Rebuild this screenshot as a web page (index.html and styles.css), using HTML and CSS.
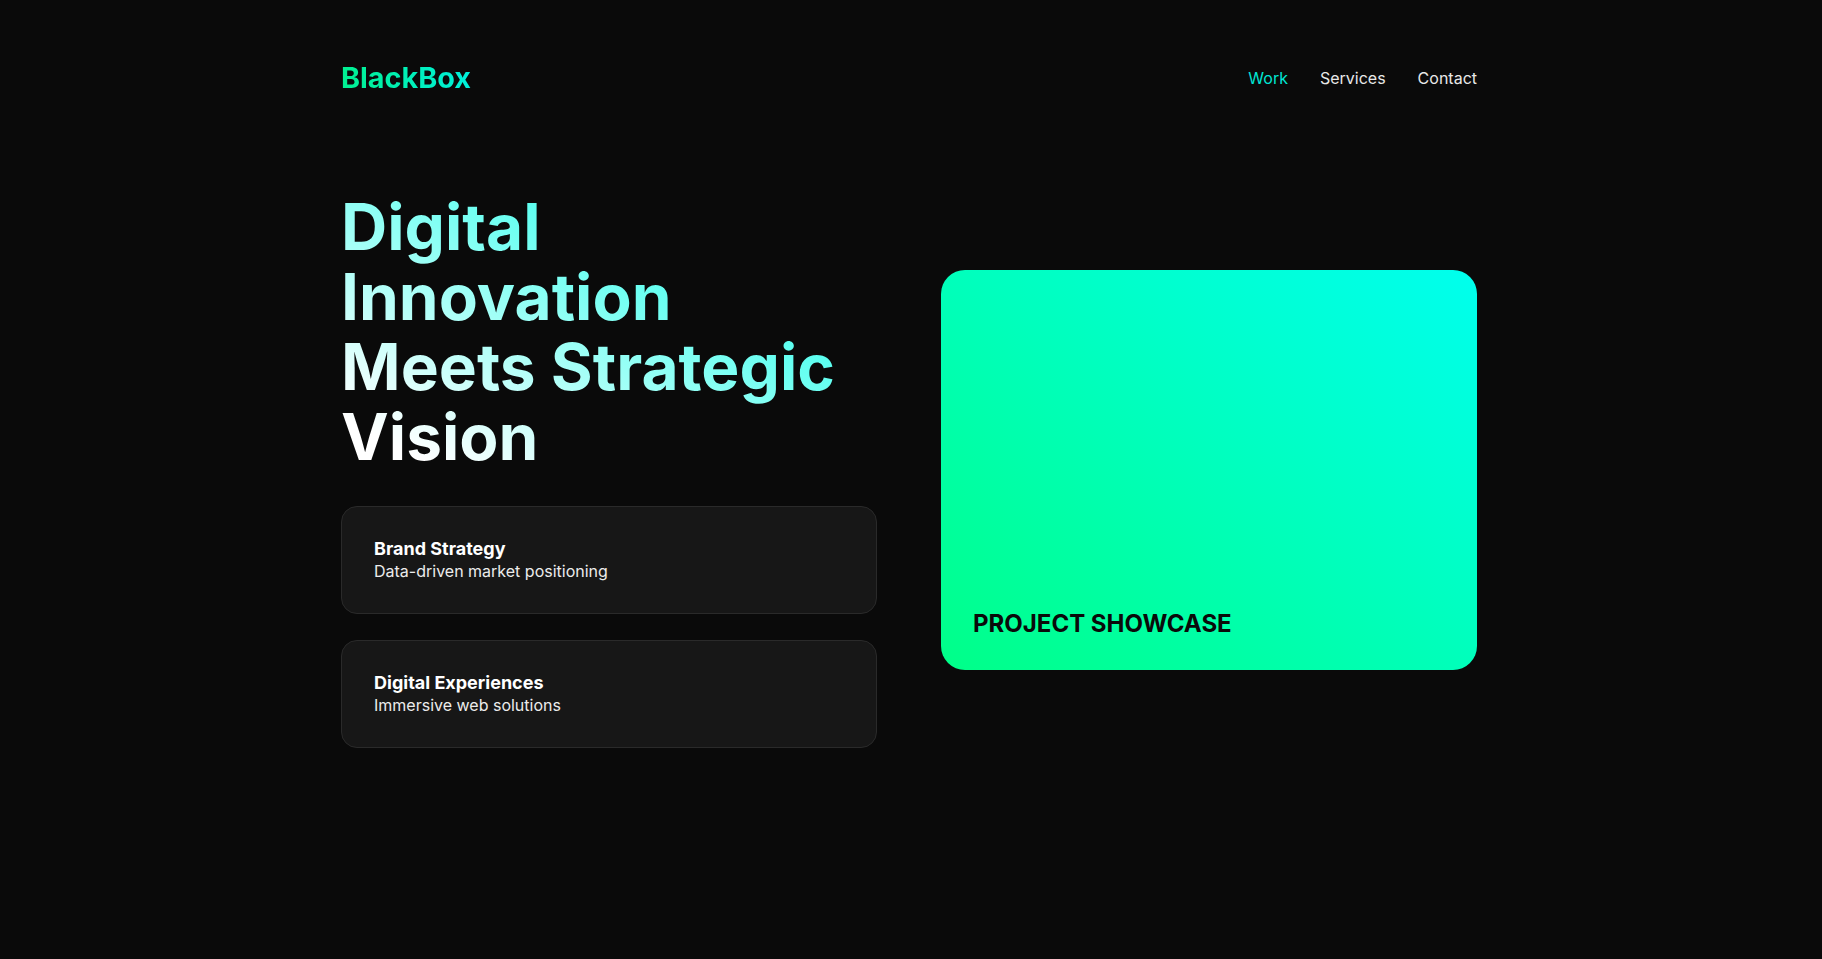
FILE: index.html
```html
<!DOCTYPE html>
<html lang="en">
<head>
<meta charset="utf-8">
<title>BlackBox</title>
<link rel="stylesheet" href="styles.css">
</head>
<body>
<div class="page">
  <header class="header">
    <div class="logo">BlackBox</div>
    <nav class="nav">
      <a class="nav-link active" href="#">Work</a>
      <a class="nav-link" href="#">Services</a>
      <a class="nav-link" href="#">Contact</a>
    </nav>
  </header>
  <main class="hero">
    <div class="hero-left">
      <h1 class="title">Digital Innovation Meets Strategic Vision</h1>
      <div class="cards">
        <div class="card">
          <div class="card-title">Brand Strategy</div>
          <div class="card-desc">Data-driven market positioning</div>
        </div>
        <div class="card">
          <div class="card-title">Digital Experiences</div>
          <div class="card-desc">Immersive web solutions</div>
        </div>
      </div>
    </div>
    <div class="showcase">
      <div class="showcase-label">PROJECT SHOWCASE</div>
    </div>
  </main>
</div>
</body>
</html>
```

FILE: styles.css
```css
* { box-sizing: border-box; }
html, body { margin: 0; padding: 0; }
body {
  background: #0a0a0a;
  color: #ffffff;
  font-family: Inter, "Noto Sans", sans-serif;
  min-height: 959px;
}
.page {
  max-width: 1200px;
  margin: 0 auto;
  padding: 0 34px 0 30px;
}
.header {
  display: flex;
  justify-content: space-between;
  align-items: center;
  padding-top: 62px;
  height: 94px;
}
.logo {
  font-size: 28.8px;
  font-weight: 700;
  line-height: 32px;
  background: linear-gradient(90deg, #00f090, #00f0dc);
  -webkit-background-clip: text;
  background-clip: text;
  color: transparent;
}
.nav {
  display: flex;
  gap: 32px;
}
.nav-link {
  color: #e8e8e8;
  text-decoration: none;
  font-size: 16px;
  line-height: 24px;
}
.nav-link.active { color: #00e6d4; }
.hero {
  display: grid;
  grid-template-columns: 1fr 1fr;
  gap: 64px;
  align-items: center;
  margin-top: 98px;
}
.title {
  max-width: 510px;
  margin: 0 0 34px;
  font-size: 64px;
  line-height: 70px;
  font-weight: 700;
  background: linear-gradient(to top right, #ffffff 10%, #00ffe8 100%);
  -webkit-background-clip: text;
  background-clip: text;
  color: transparent;
}
.cards {
  display: flex;
  flex-direction: column;
  gap: 26px;
}
.card {
  background: #171717;
  border: 1px solid #2a2a2a;
  border-radius: 16px;
  padding: 31px 32px 31px;
}
.card-title {
  font-size: 18px;
  line-height: 22px;
  font-weight: 700;
  color: #ffffff;
}
.card-desc {
  font-size: 16px;
  line-height: 22px;
  color: #ececec;
}
.showcase {
  height: 400px;
  border-radius: 24px;
  background: linear-gradient(to top right, #00ff88 0%, #00ffee 100%);
  display: flex;
  align-items: flex-end;
  padding: 32px 32px 30px;
}
.showcase-label {
  font-size: 24px;
  line-height: 32px;
  font-weight: 700;
  color: #0a0a0a;
}
```
